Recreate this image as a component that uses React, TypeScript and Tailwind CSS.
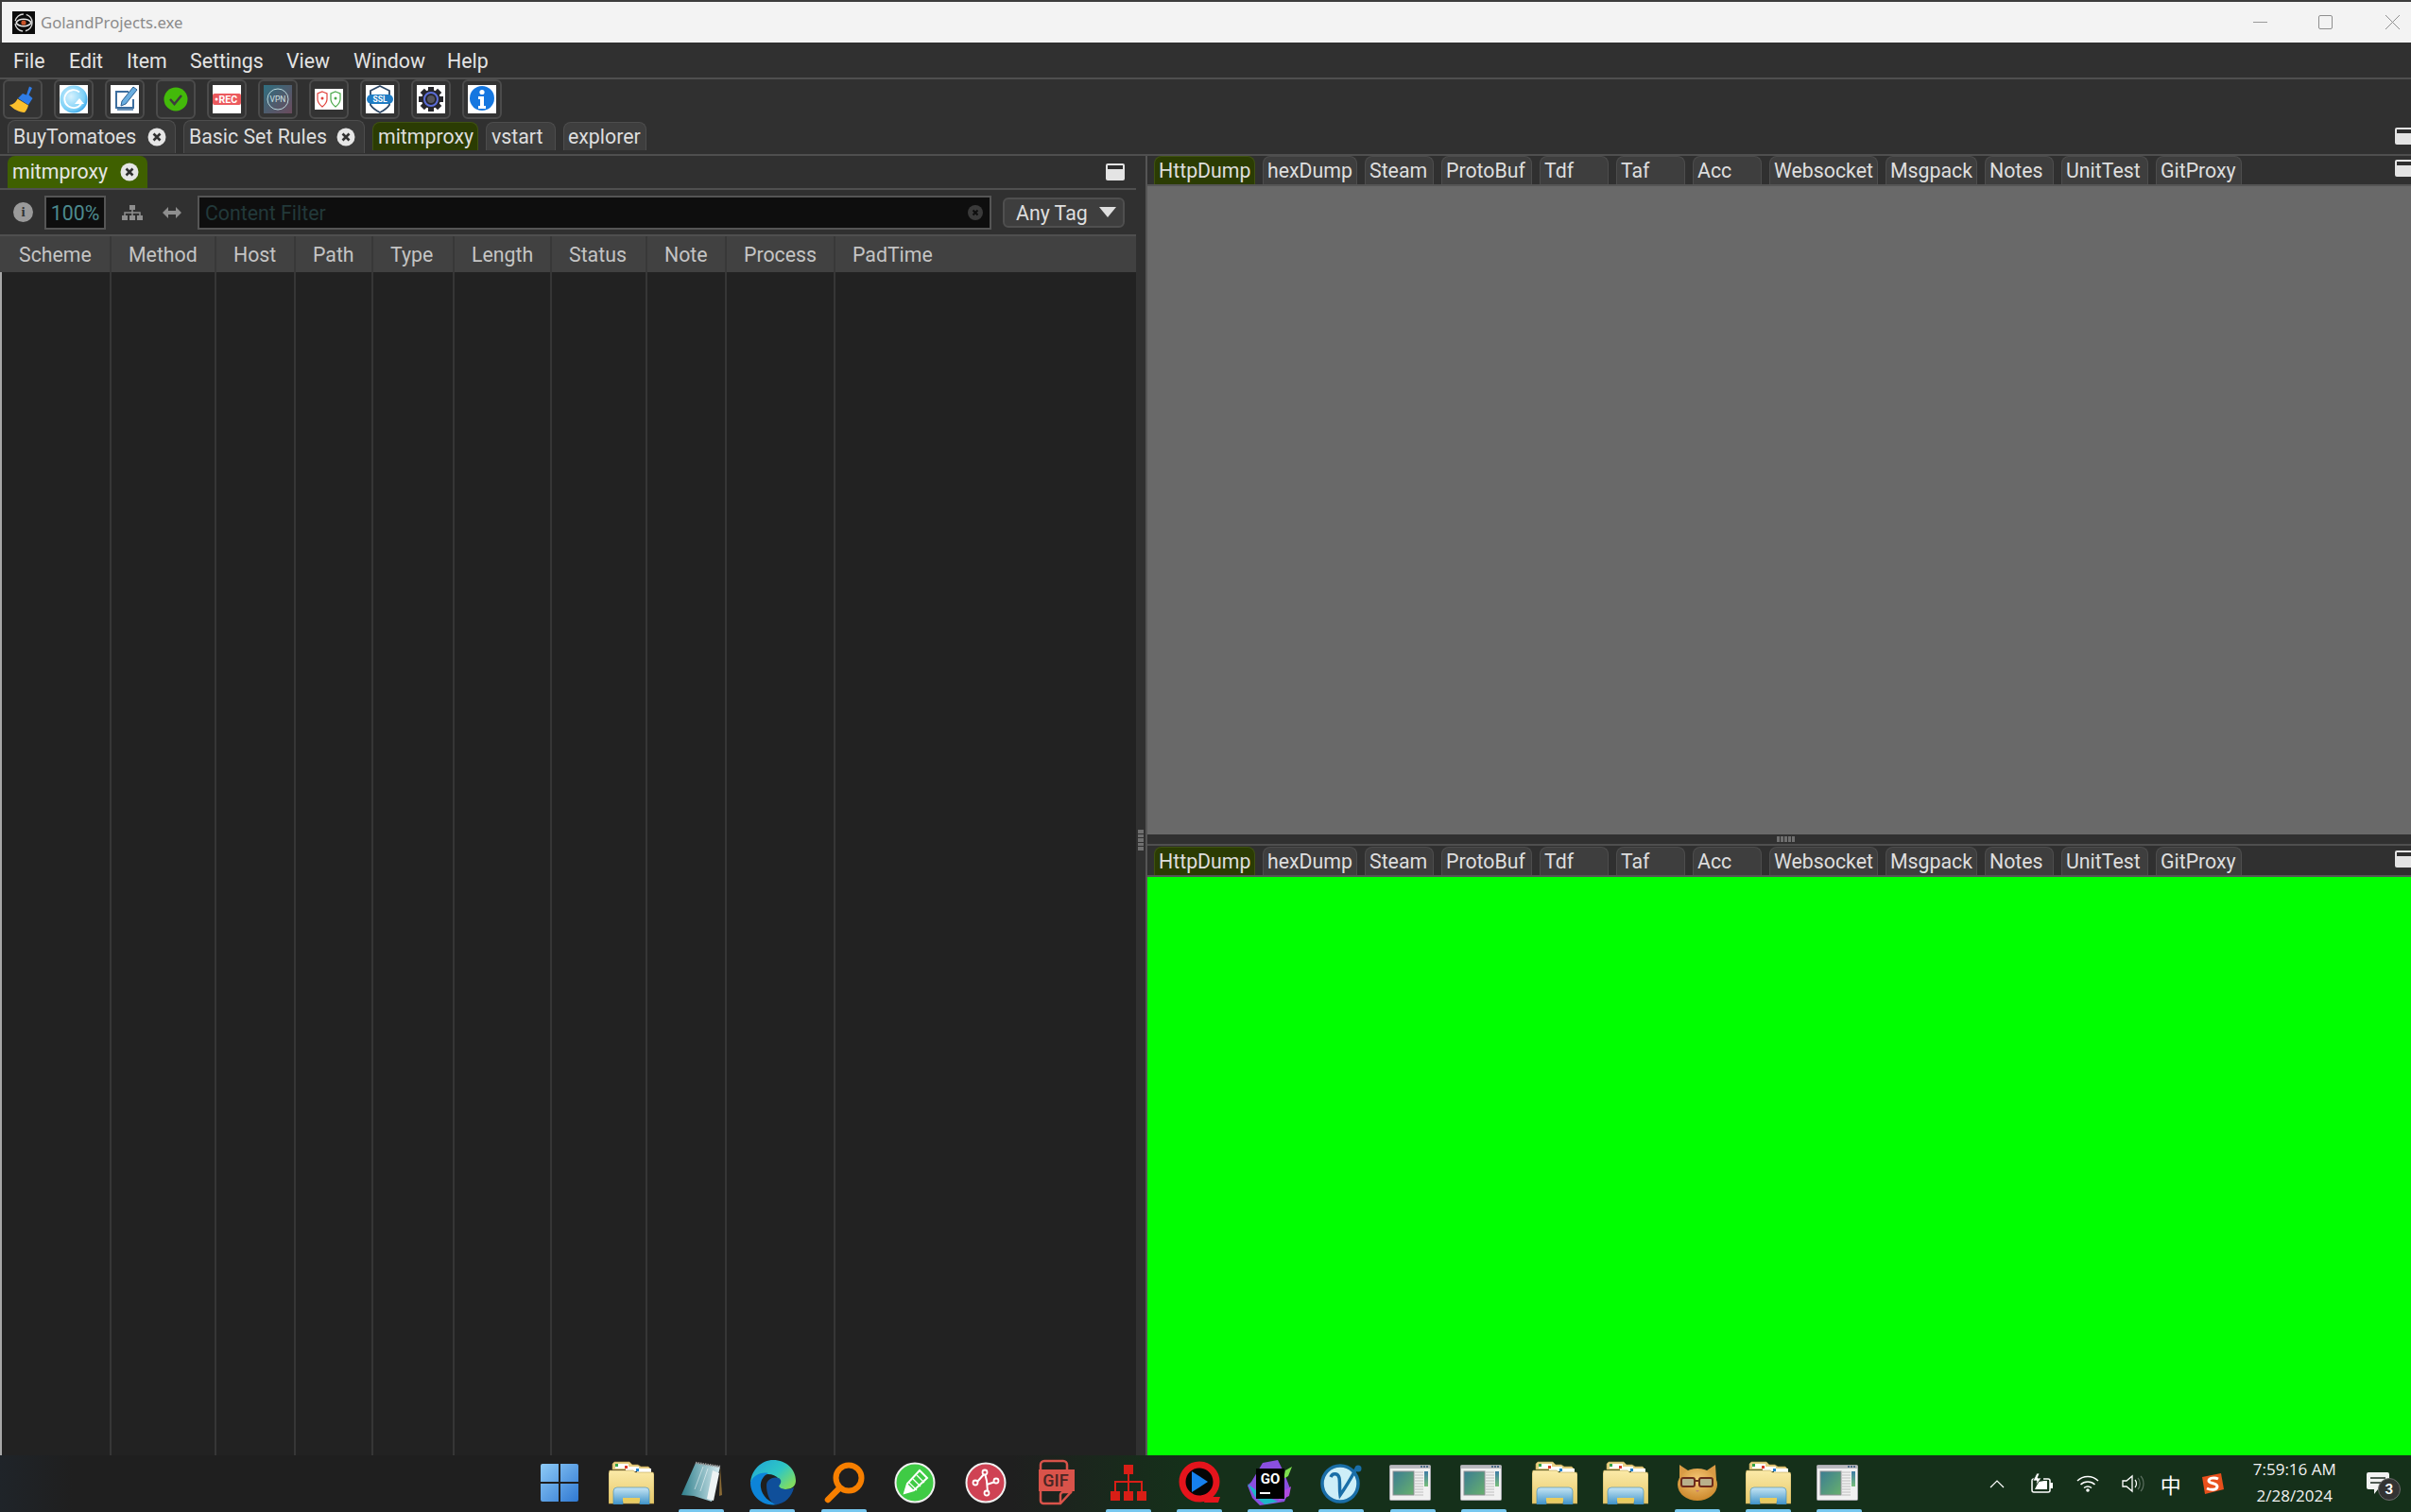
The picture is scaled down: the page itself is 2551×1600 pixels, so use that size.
import type { ReactNode } from "react";

const columns = [
  { label: "Scheme", w: "w-[116px]", pl: "pl-[18px]" },
  { label: "Method", w: "w-[111px]", pl: "pl-[18px]" },
  { label: "Host", w: "w-[84px]", pl: "pl-[18px]" },
  { label: "Path", w: "w-[82px]", pl: "pl-[18px]" },
  { label: "Type", w: "w-[86px]", pl: "pl-[18px]" },
  { label: "Length", w: "w-[103px]", pl: "pl-[18px]" },
  { label: "Status", w: "w-[101px]", pl: "pl-[18px]" },
  { label: "Note", w: "w-[84px]", pl: "pl-[18px]" },
  { label: "Process", w: "w-[115px]", pl: "pl-[18px]" },
  { label: "PadTime", w: "w-[120px]", pl: "pl-[18px]" },
];

const viewTabs = [
  { label: "HttpDump", w: "w-[107px]", active: true },
  { label: "hexDump", w: "w-[100px]" },
  { label: "Steam", w: "w-[73px]" },
  { label: "ProtoBuf", w: "w-[96px]" },
  { label: "Tdf", w: "w-[73px]" },
  { label: "Taf", w: "w-[73px]" },
  { label: "Acc", w: "w-[73px]" },
  { label: "Websocket", w: "w-[115px]" },
  { label: "Msgpack", w: "w-[97px]" },
  { label: "Notes", w: "w-[73px]" },
  { label: "UnitTest", w: "w-[92px]" },
  { label: "GitProxy", w: "w-[91px]" },
];

function CloseDot() {
  return (
    <svg viewBox="0 0 20 20" className="h-[20px] w-[20px] shrink-0">
      <circle cx="10" cy="10" r="9.5" fill="#e6e6e6" />
      <path d="M6.5 6.5l7 7M13.5 6.5l-7 7" stroke="#303030" strokeWidth="2.6" />
    </svg>
  );
}

function Collapse({ className }: { className: string }) {
  return (
    <div className={`flex h-[18px] w-[20px] shrink-0 flex-col rounded-[2px] bg-[#e4e4e4] p-[2px] ${className}`}>
      <div className="h-[4px] bg-[#2f2f2f]" />
    </div>
  );
}

function ViewTabs({ collapse }: { collapse?: boolean }) {
  return (
    <div className="flex h-[30px] shrink-0 gap-[8px] pl-[7px]">
      {viewTabs.map((t) => (
        <div
          key={t.label}
          className={`flex h-[30px] items-center rounded-t-[8px] border border-b-0 pl-[4px] text-[21.3px] text-[#dedede] ${t.w} ${
            t.active ? "border-[#3f5212] bg-[#2b3c03]" : "border-[#4d4d4d] bg-[#3e3e3e]"
          }`}
        >
          {t.label}
        </div>
      ))}
      {collapse && <Collapse className="ml-auto -mr-[3px] mt-[4px]" />}
    </div>
  );
}

function ToolBtn({ children }: { children: ReactNode }) {
  return (
    <div className="flex h-[42px] w-[42px] items-center justify-center rounded-[6px] border-2 border-[#4b4b4b] bg-[#333333]">
      {children}
    </div>
  );
}

function Grip({ vertical }: { vertical?: boolean }) {
  return (
    <div className={`flex ${vertical ? "flex-col gap-[1px]" : "gap-[1px]"}`}>
      {[0, 1, 2, 3, 4].map((i) => (
        <div key={i} className={`bg-[#6f6f6f] ${vertical ? "h-[3.5px] w-[6px]" : "h-[6px] w-[3px]"}`} />
      ))}
    </div>
  );
}

function Logo() {
  return (
    <svg viewBox="0 0 24 24" className="h-[24px] w-[24px]">
      <rect width="24" height="24" fill="#0b0b0b" />
      <circle cx="12" cy="12" r="9" fill="none" stroke="#d8d8d8" strokeWidth="1.4" strokeDasharray="12 3" />
      <path d="M4 12c3-5 13-5 16 0M4 12c3 5 13 5 16 0" fill="none" stroke="#e8e8e8" strokeWidth="1.5" />
      <circle cx="12" cy="12" r="2.6" fill="#c9542a" />
    </svg>
  );
}

function Broom() {
  return (
    <svg viewBox="0 0 30 30" className="h-[30px] w-[30px]">
      <path d="M22 1.500L25 3l-3.500 7.500 4 3.500L21 21 10 14l5-5 4 1.500z" fill="#2f7de8" />
      <path d="M9.500 14.500L21 21.500c-1 3.500-2.500 6-4 7.500C11 28.500 5 25.500 1 21c4 0 7-3 8.500-6.500z" fill="#fbc02d" />
    </svg>
  );
}

function RefreshIcon() {
  return (
    <svg viewBox="0 0 30 30" className="h-[30px] w-[30px] bg-white">
      <defs>
        <radialGradient id="rf" cx="0.4" cy="0.4" r="0.7">
          <stop offset="0" stopColor="#d7f2fe" />
          <stop offset="0.7" stopColor="#7cd0f7" />
          <stop offset="1" stopColor="#1d93e2" />
        </radialGradient>
      </defs>
      <circle cx="15" cy="15" r="14.500" fill="url(#rf)" />
      <path d="M21 7.500a9.500 9.500 0 1 0 2 12" fill="none" stroke="#fff" strokeWidth="1.800" />
      <path d="M21 14l5 6h-10z" fill="#fff" />
    </svg>
  );
}

function EditIcon() {
  return (
    <svg viewBox="0 0 30 30" className="h-[30px] w-[30px] bg-white">
      <path d="M5 6h14v2H7v15h16v-8h2v10H5z" fill="#3c6e9f" />
      <path d="M24 2l4 3-12 15-5 2 1-5z" fill="#6aaee0" stroke="#2a5f91" />
      <path d="M7 26h17" stroke="#3c6e9f" strokeWidth="1.500" />
    </svg>
  );
}

function CheckIcon() {
  return (
    <svg viewBox="0 0 30 30" className="h-[30px] w-[30px]">
      <circle cx="15" cy="15" r="12.500" fill="#43b90a" />
      <path d="M9 15l4.500 5L21 11" fill="none" stroke="#3d3d3d" strokeWidth="2.500" />
    </svg>
  );
}

function RecIcon() {
  return (
    <svg viewBox="0 0 30 30" className="h-[30px] w-[30px] bg-white">
      <rect x="0" y="9" width="30" height="12" rx="2" fill="#ec5a5e" />
      <circle cx="4" cy="15" r="1.500" fill="#fff" />
      <text x="6.500" y="19" fontSize="10.500" fontWeight="700" fill="#fff" fontFamily="Roboto,sans-serif">
        REC
      </text>
    </svg>
  );
}

function VpnIcon() {
  return (
    <svg viewBox="0 0 30 30" className="h-[30px] w-[30px]">
      <defs>
        <linearGradient id="vp" x1="0" y1="0" x2="1" y2="1">
          <stop offset="0" stopColor="#2f6f80" />
          <stop offset="1" stopColor="#6b4a5c" />
        </linearGradient>
      </defs>
      <rect width="30" height="30" fill="url(#vp)" />
      <circle cx="15" cy="15" r="11" fill="none" stroke="#b8d8dc" strokeWidth="1" />
      <text x="15" y="18" textAnchor="middle" fontSize="8.500" fill="#cfe3e5" fontFamily="Roboto,sans-serif">
        VPN
      </text>
    </svg>
  );
}

function ShieldsIcon() {
  return (
    <svg viewBox="0 0 30 22" className="h-[22px] w-[30px] bg-white">
      <path d="M8 3l5 2v6c0 4-2.500 6-5 8-2.500-2-5-4-5-8V5z" fill="none" stroke="#e0423c" strokeWidth="1.200" />
      <circle cx="8" cy="10" r="1.500" fill="#e0423c" />
      <path d="M22 3l5 2v6c0 4-2.500 6-5 8-2.500-2-5-4-5-8V5z" fill="none" stroke="#4aa84a" strokeWidth="1.200" />
      <circle cx="22" cy="10" r="1.500" fill="#4aa84a" />
    </svg>
  );
}

function SslIcon() {
  return (
    <svg viewBox="0 0 30 30" className="h-[30px] w-[30px] bg-white">
      <path d="M15 1l10 5v5H5V6z" fill="none" stroke="#2c4766" strokeWidth="1.800" />
      <path d="M5 19v2c2 3 6 6 10 8 4-2 8-5 10-8v-2" fill="none" stroke="#2c4766" strokeWidth="1.800" />
      <rect x="1" y="10" width="28" height="10" rx="5" fill="#1f7cc4" />
      <text x="15" y="18" textAnchor="middle" fontSize="8.500" fontWeight="700" fill="#fff" fontFamily="Roboto,sans-serif">
        SSL
      </text>
    </svg>
  );
}

function GearIcon() {
  return (
    <svg viewBox="0 0 30 30" className="h-[30px] w-[30px] bg-white">
      <g fill="#26262b">
        {[0, 45, 90, 135].map((a) => (
          <rect key={a} x="12" y="2" width="6" height="26" transform={`rotate(${a} 15 15)`} />
        ))}
      </g>
      <circle cx="15" cy="15" r="10" fill="#26262b" />
      <circle cx="15" cy="15" r="7" fill="none" stroke="#5b6dd8" strokeWidth="2" />
      <circle cx="15" cy="15" r="4" fill="#55555e" />
    </svg>
  );
}

function InfoIcon() {
  return (
    <svg viewBox="0 0 30 30" className="h-[30px] w-[30px] bg-white">
      <circle cx="15" cy="14" r="13" fill="#1577e0" />
      <circle cx="15" cy="7.500" r="2.600" fill="#fff" />
      <path d="M11 12h6v10h2v3h-8v-3h2v-7h-2z" fill="#fff" />
    </svg>
  );
}

function StartIcon() {
  return (
    <svg viewBox="0 0 40 40" className="h-[40px] w-[40px]">
      <defs>
        <linearGradient id="st" x1="0" y1="0" x2="1" y2="1">
          <stop offset="0" stopColor="#8ecbf7" />
          <stop offset="1" stopColor="#2f78d2" />
        </linearGradient>
      </defs>
      <path d="M2 0h17v19H0V2a2 2 0 0 1 2-2zM21 0h17a2 2 0 0 1 2 2v17H21zM0 21h19v19H2a2 2 0 0 1-2-2zM21 21h19v17a2 2 0 0 1-2 2H21z" fill="url(#st)" />
    </svg>
  );
}

function FolderIcon({ id, className = "" }: { id: string; className?: string }) {
  return (
    <svg viewBox="0 0 48 46" className={`h-[46px] w-[48px] ${className}`}>
      <defs>
        <linearGradient id={`fa${id}`} x1="0" y1="0" x2="0" y2="1">
          <stop offset="0" stopColor="#fbeaa8" />
          <stop offset="1" stopColor="#e6c869" />
        </linearGradient>
        <linearGradient id={`fb${id}`} x1="0" y1="0" x2="0" y2="1">
          <stop offset="0" stopColor="#c7e6f4" />
          <stop offset="1" stopColor="#3f93c9" />
        </linearGradient>
      </defs>
      <path d="M4 9V3l2-2h16l3 3h6l3 2h8l3 3z" fill="#e8cf84" stroke="#b99b4d" strokeWidth="0.600" />
      <rect x="7" y="3" width="14" height="5" fill="#fff" />
      <rect x="7" y="3" width="3" height="3" fill="#35a548" />
      <rect x="18" y="6" width="14" height="5" fill="#fff" />
      <rect x="17" y="5" width="3" height="3" fill="#dc3a2c" />
      <rect x="30" y="8" width="15" height="5" fill="#fff" />
      <rect x="29" y="8" width="3" height="3" fill="#2385d0" />
      <path d="M0 13l1-3h25l2 2h19l1 2v31H0z" fill={`url(#fa${id})`} stroke="#bda253" strokeWidth="0.600" />
      <path d="M5 46V32a4 4 0 0 1 4-4h30a4 4 0 0 1 4 4v14h-10v-4l-2-2H17l-2 2v4z" fill={`url(#fb${id})`} stroke="#3b86b3" strokeWidth="0.600" />
      <rect x="15" y="39" width="18" height="4" fill="#e9cc5e" />
    </svg>
  );
}

function NotepadIcon() {
  return (
    <svg viewBox="0 0 46 46" className="h-[46px] w-[46px]">
      <defs>
        <linearGradient id="np" x1="0" y1="0" x2="1" y2="0">
          <stop offset="0" stopColor="#2f7f8c" />
          <stop offset="1" stopColor="#d7ebf0" />
        </linearGradient>
      </defs>
      <path d="M43 6l2 30-3 1z" fill="#8a6a35" />
      <path d="M17 2l26 4-9 37-19-6-13-1z" fill="url(#np)" />
      <path d="M16 30l9-24M22 32l8-24" stroke="#ffffff" strokeOpacity="0.500" />
      <path d="M35 10l7 3-6 29-7-2z" fill="#eef3f4" />
      <path d="M17 2l26 4" stroke="#9a9a9a" strokeWidth="2.500" strokeDasharray="1.500 1" />
    </svg>
  );
}

function EdgeIcon() {
  return (
    <svg viewBox="0 0 48 48" className="ml-[2px] h-[48px] w-[48px]">
      <defs>
        <linearGradient id="eg" x1="0" y1="0" x2="1" y2="0.700">
          <stop offset="0" stopColor="#1fa3d9" />
          <stop offset="0.600" stopColor="#2fc7c4" />
          <stop offset="1" stopColor="#7fdc62" />
        </linearGradient>
      </defs>
      <path d="M0 24C1 10 12 0 24 0c14 0 24 10 24 22 0 6-5 9-11 9-4 0-7-1-8-3 3-2 3-5 1-8-4-5-11-6-17-4C7 18 2 21 0 24z" fill="url(#eg)" />
      <path d="M0 24c2-7 11-12 19-10-6 3-9 9-8 15 1 9 9 16 18 18C14 50 0 39 0 24z" fill="#0d84d8" />
      <path d="M17 27c0-6 6-10 13-8 3 2 3 5 0 8 1 3 4 4 8 4 3 0 6-1 8-2-2 10-10 18-20 18-6-3-9-12-9-20z" fill="#0f4f9a" />
    </svg>
  );
}

function SearchIcon() {
  return (
    <svg viewBox="0 0 44 46" className="ml-[2px] h-[46px] w-[44px]">
      <circle cx="26" cy="18" r="13.500" fill="none" stroke="#f77f00" strokeWidth="6" />
      <path d="M16 29L4 41" stroke="#f77f00" strokeWidth="6.500" strokeLinecap="round" />
    </svg>
  );
}

function PencilBadge() {
  return (
    <svg viewBox="0 0 44 44" className="h-[44px] w-[44px]">
      <circle cx="22" cy="22" r="20.500" fill="#3fcb45" stroke="#f1f1f1" strokeWidth="2" />
      <path d="M11 33l3-10L27 9l8 8-14 13z" fill="none" stroke="#fff" strokeWidth="2" />
      <path d="M11 33l3-10 7 7z" fill="#fff" />
      <path d="M16 22l8 8M20 18l8 8M24 14l8 8" stroke="#fff" strokeWidth="1.200" />
    </svg>
  );
}

function BranchBadge() {
  return (
    <svg viewBox="0 0 44 44" className="h-[44px] w-[44px]">
      <circle cx="22" cy="22" r="20.500" fill="#cf4254" stroke="#f1f1f1" strokeWidth="2" />
      <path d="M21 12l-8 9M21 12l2 8 1 12M23 24l9-3" fill="none" stroke="#fff" strokeWidth="2" />
      <circle cx="21" cy="11" r="2.500" fill="#cf4254" stroke="#fff" strokeWidth="1.800" />
      <circle cx="11" cy="22" r="2.500" fill="#cf4254" stroke="#fff" strokeWidth="1.800" />
      <circle cx="33" cy="20" r="2.500" fill="#cf4254" stroke="#fff" strokeWidth="1.800" />
      <circle cx="23" cy="33" r="2.500" fill="#cf4254" stroke="#fff" strokeWidth="1.800" />
    </svg>
  );
}

function GifIcon() {
  return (
    <svg viewBox="0 0 38 50" className="h-[50px] w-[38px]">
      <path d="M2 16V6a4 4 0 0 1 4-4h20a4 4 0 0 1 4 4v10M2 34v10a3 3 0 0 0 3 3h18l12-13" fill="none" stroke="#d9534a" strokeWidth="2.500" />
      <path d="M23 47V38a3 3 0 0 1 3-3h9" fill="none" stroke="#d9534a" strokeWidth="2.500" />
      <rect x="0" y="11" width="38" height="23" fill="#d9534a" />
      <text x="18" y="29" textAnchor="middle" fontSize="18" fontWeight="500" fill="#4a2624" fontFamily="Roboto,sans-serif">
        GIF
      </text>
    </svg>
  );
}

function NetworkIcon() {
  return (
    <svg viewBox="0 0 38 38" className="h-[38px] w-[38px]">
      <g fill="#d81e16">
        <rect x="14" y="0" width="10" height="10" />
        <rect x="0" y="28" width="10" height="10" />
        <rect x="14" y="28" width="10" height="10" />
        <rect x="28" y="28" width="10" height="10" />
      </g>
      <path d="M19 10v18M5 28V18h28v10" fill="none" stroke="#d81e16" strokeWidth="2" />
    </svg>
  );
}

function QuickIcon() {
  return (
    <svg viewBox="0 0 46 46" className="h-[46px] w-[46px]">
      <circle cx="23" cy="22" r="18" fill="#050505" stroke="#e5141c" strokeWidth="7" />
      <path d="M30 38h15l-2 6H28z" fill="#e5141c" />
      <path d="M15 11l17 11-17 11z" fill="#1680ee" />
    </svg>
  );
}

function GoIcon() {
  return (
    <svg viewBox="0 0 48 50" className="h-[50px] w-[48px]">
      <path d="M4 24L16 4l16-3 6 12 7 18-6 14-12 2-14 2-8-8L0 28z" fill="#8a4fe0" />
      <path d="M0 26l8 14 10 8 14-3-18-8z" fill="#1fb6c9" />
      <path d="M32 45l12-6 2-10-10 6z" fill="#b04be0" />
      <path d="M40 12l7-4-4 10-5 3z" fill="#7fe14f" />
      <rect x="9" y="10" width="30" height="32" fill="#000" />
      <text x="24" y="26" textAnchor="middle" fontSize="15" fontWeight="700" fill="#fff" fontFamily="Roboto,sans-serif">
        GO
      </text>
      <rect x="13" y="35" width="11" height="2" fill="#fff" />
    </svg>
  );
}

function VeeIcon() {
  return (
    <svg viewBox="0 0 44 46" className="h-[46px] w-[44px]">
      <circle cx="21" cy="24" r="19" fill="#cdeef8" stroke="#1a6ea8" strokeWidth="3.500" />
      <path d="M11 17c2-5 8-4 9 1 1 5 0 12 1 18 5-7 11-17 17-28" fill="none" stroke="#1a6ea8" strokeWidth="3.500" />
      <circle cx="40" cy="8" r="3.500" fill="#1a6ea8" />
    </svg>
  );
}

function WindowIcon({ id }: { id: string }) {
  return (
    <svg viewBox="0 0 44 38" className="mr-[5px] h-[38px] w-[44px]">
      <defs>
        <linearGradient id={`wa${id}`} x1="0" y1="0" x2="1" y2="1">
          <stop offset="0" stopColor="#3b7d93" />
          <stop offset="1" stopColor="#68b06c" />
        </linearGradient>
        <linearGradient id={`wb${id}`} x1="0" y1="0" x2="0" y2="1">
          <stop offset="0" stopColor="#3f7da6" />
          <stop offset="1" stopColor="#79be7b" />
        </linearGradient>
      </defs>
      <rect x="0.500" y="0.500" width="43" height="37" rx="1" fill="#f1f1f1" stroke="#a7a7ad" />
      <rect x="1" y="1" width="42" height="3" fill="#b9b9be" />
      <rect x="33" y="1" width="2" height="2" fill="#4f6d88" />
      <rect x="36" y="1" width="2" height="2" fill="#4f6d88" />
      <rect x="39" y="1" width="2" height="2" fill="#4f6d88" />
      <rect x="4" y="7" width="22" height="25" fill={`url(#wa${id})`} stroke="#8f8f95" />
      <path d="M27 8h9M27 11h9M27 14h9M27 17h9M27 20h9M27 23h9M27 26h9M27 29h9M27 32h9" stroke="#bdbdbd" />
      <rect x="37" y="7" width="4" height="16" fill={`url(#wb${id})`} />
    </svg>
  );
}

function CatIcon() {
  return (
    <svg viewBox="0 0 44 40" className="h-[40px] w-[44px]">
      <defs>
        <radialGradient id="ct" cx="0.5" cy="0.35" r="0.7">
          <stop offset="0" stopColor="#f5c877" />
          <stop offset="1" stopColor="#c98326" />
        </radialGradient>
      </defs>
      <path d="M3 1l9 6h20l9-6 1 16H3z" fill="#d99b45" />
      <ellipse cx="22" cy="22" rx="21" ry="17" fill="url(#ct)" />
      <rect x="5" y="15" width="14" height="9" rx="2" fill="#b9b08c" stroke="#6d2a1c" strokeWidth="2" />
      <rect x="24" y="15" width="14" height="9" rx="2" fill="#b9b08c" stroke="#6d2a1c" strokeWidth="2" />
      <path d="M19 18h5" stroke="#6d2a1c" strokeWidth="2" />
      <path d="M20 28h4l-2 2z" fill="#c97a70" />
    </svg>
  );
}

const taskbarIcons: { key: string; icon: ReactNode; on?: boolean }[] = [
  { key: "start", icon: <StartIcon /> },
  { key: "explorer", icon: <FolderIcon id="a" className="ml-[3px]" /> },
  { key: "notepad", icon: <NotepadIcon />, on: true },
  { key: "edge", icon: <EdgeIcon />, on: true },
  { key: "search", icon: <SearchIcon />, on: true },
  { key: "pencil", icon: <PencilBadge /> },
  { key: "branch", icon: <BranchBadge /> },
  { key: "gif", icon: <GifIcon /> },
  { key: "network", icon: <NetworkIcon />, on: true },
  { key: "quick", icon: <QuickIcon />, on: true },
  { key: "go", icon: <GoIcon />, on: true },
  { key: "vee", icon: <VeeIcon />, on: true },
  { key: "win1", icon: <WindowIcon id="a" />, on: true },
  { key: "win2", icon: <WindowIcon id="b" />, on: true },
  { key: "folder2", icon: <FolderIcon id="b" /> },
  { key: "folder3", icon: <FolderIcon id="c" /> },
  { key: "cat", icon: <CatIcon />, on: true },
  { key: "folder4", icon: <FolderIcon id="d" />, on: true },
  { key: "win3", icon: <WindowIcon id="c" />, on: true },
];

export default function App() {
  return (
    <div className="flex h-[1600px] w-[2551px] flex-col overflow-hidden bg-[#303030] [font-family:Roboto,sans-serif]">
      {/* title bar */}
      <div className="flex h-[45px] shrink-0 items-center border-l-2 border-t-2 border-[#3c3c3c] bg-[#f3f3f3] pl-[11px]">
        <Logo />
        <span className="ml-[6px] text-[16.7px] text-[#8b8b8b] [font-family:'Noto_Sans',sans-serif]">GolandProjects.exe</span>
        <div className="ml-auto flex items-center pr-[12px]">
          <div className="h-[1px] w-[15px] bg-[#9a9a9a]" />
          <div className="ml-[54px] h-[15px] w-[15px] rounded-[2px] border border-[#8f8f8f]" />
          <svg viewBox="0 0 15 15" className="ml-[56px] h-[15px] w-[15px]">
            <path d="M0 0l15 15M15 0L0 15" stroke="#8f8f8f" />
          </svg>
        </div>
      </div>

      {/* menu */}
      <div className="flex h-[39px] shrink-0 items-center border-b-2 border-[#4f4f4f] pl-[14px] pt-[2px] text-[21.3px] text-[#e4e4e4]">
        <span className="w-[59px]">File</span>
        <span className="w-[61px]">Edit</span>
        <span className="w-[67px]">Item</span>
        <span className="w-[102px]">Settings</span>
        <span className="w-[71px]">View</span>
        <span className="w-[99px]">Window</span>
        <span>Help</span>
      </div>

      {/* toolbar */}
      <div className="flex h-[43px] shrink-0 gap-[12px] pl-[3px]">
        <ToolBtn><Broom /></ToolBtn>
        <ToolBtn><RefreshIcon /></ToolBtn>
        <ToolBtn><EditIcon /></ToolBtn>
        <ToolBtn><CheckIcon /></ToolBtn>
        <ToolBtn><RecIcon /></ToolBtn>
        <ToolBtn><VpnIcon /></ToolBtn>
        <ToolBtn><ShieldsIcon /></ToolBtn>
        <ToolBtn><SslIcon /></ToolBtn>
        <ToolBtn><GearIcon /></ToolBtn>
        <ToolBtn><InfoIcon /></ToolBtn>
      </div>

      {/* workspace tabs */}
      <div className="flex h-[38px] shrink-0 gap-[8px] border-b-2 border-[#4f4f4f] pl-[8px] text-[21.3px] text-[#dedede]">
        <div className="flex h-[35px] w-[178px] items-center justify-between rounded-t-[8px] border border-b-0 border-[#4d4d4d] bg-[#3a3a3a] pl-[5px] pr-[9px]">
          BuyTomatoes <CloseDot />
        </div>
        <div className="flex h-[35px] w-[192px] items-center justify-between rounded-t-[8px] border border-b-0 border-[#4d4d4d] bg-[#3a3a3a] pl-[5px] pr-[9px]">
          Basic Set Rules <CloseDot />
        </div>
        <div className="mt-[2px] flex h-[30px] w-[112px] items-center rounded-t-[8px] border border-b-0 border-[#3f5212] bg-[#2b3c03] pl-[5px]">
          mitmproxy
        </div>
        <div className="mt-[2px] flex h-[30px] w-[74px] items-center rounded-t-[8px] border border-b-0 border-[#4d4d4d] bg-[#3e3e3e] pl-[5px]">
          vstart
        </div>
        <div className="mt-[2px] flex h-[30px] w-[88px] items-center rounded-t-[8px] border border-b-0 border-[#4d4d4d] bg-[#3e3e3e] pl-[4px]">
          explorer
        </div>
        <Collapse className="ml-auto -mr-[3px] mt-[8px]" />
      </div>

      <div className="flex min-h-0 flex-1">
        {/* left pane */}
        <div className="flex w-[1202px] shrink-0 flex-col">
          <div className="flex h-[36px] shrink-0 justify-between border-b-2 border-[#4f4f4f] pl-[8px] pr-[12px]">
            <div className="flex h-[34px] w-[148px] items-center justify-between rounded-t-[8px] bg-[#3f6000] pl-[5px] pr-[9px] text-[21.3px] text-[#e6e6e6]">
              mitmproxy <CloseDot />
            </div>
            <Collapse className="mt-[8px]" />
          </div>

          <div className="flex h-[49px] shrink-0 items-center border-b-2 border-[#4f4f4f] pl-[14px]">
            <div className="flex h-[21px] w-[21px] items-center justify-center rounded-full bg-[#9a9a9a] text-[15px] font-bold text-[#333333] [font-family:'Liberation_Serif',serif]">
              i
            </div>
            <div className="ml-[12px] flex h-[36px] w-[65px] items-center justify-center border-2 border-[#555555] bg-[#0e0e0e] pt-[2px] text-[21.3px] text-[#4c8a8d]">
              100%
            </div>
            <svg viewBox="0 0 22 16" className="ml-[17px] h-[16px] w-[22px]">
              <g fill="#8e8e8e">
                <rect x="8" y="0" width="6" height="5" />
                <rect x="0" y="11" width="6" height="5" />
                <rect x="8" y="11" width="6" height="5" />
                <rect x="16" y="11" width="6" height="5" />
              </g>
              <path d="M11 5v6M3 11V8h16v3" fill="none" stroke="#8e8e8e" strokeWidth="1.500" />
            </svg>
            <svg viewBox="0 0 20 14" className="ml-[21px] h-[14px] w-[20px]">
              <path d="M0 7l6-6v4h8V1l6 6-6 6V9H6v4z" fill="#8e8e8e" />
            </svg>
            <div className="ml-[17px] flex h-[36px] w-[840px] items-center justify-between border-2 border-[#555555] bg-[#0e0e0e] pl-[6px] pr-[7px] text-[21.3px] text-[#22393a]">
              <span className="pt-[2px]">Content Filter</span>
              <svg viewBox="0 0 16 16" className="h-[16px] w-[16px]">
                <circle cx="8" cy="8" r="8" fill="#3a3a3a" />
                <path d="M5.500 5.500l5 5M10.500 5.500l-5 5" stroke="#0e0e0e" strokeWidth="2" />
              </svg>
            </div>
            <div className="ml-[12px] flex h-[32px] w-[129px] items-center justify-between rounded-[6px] border-2 border-[#4f4f4f] bg-[#3e3e3e] pl-[12px] pr-[7px] text-[21.3px] text-[#dedede]">
              <span className="pt-[2px]">Any Tag</span>
              <svg viewBox="0 0 18 11" className="h-[11px] w-[18px]">
                <path d="M0 0h18L9 11z" fill="#dedede" />
              </svg>
            </div>
          </div>

          <div className="flex h-[38px] shrink-0 border-l-2 border-[#414141] bg-[#414141] pt-[2px] text-[21.3px] text-[#c4c4c4]">
            {columns.map((c) => (
              <div key={c.label} className={`-mt-[2px] flex items-center border-r-2 border-[#383838] pt-[2px] last:border-r-0 ${c.w} ${c.pl}`}>
                {c.label}
              </div>
            ))}
          </div>

          <div className="flex min-h-0 flex-1 border-l-2 border-[#a8a8a8] bg-[#222222]">
            {columns.slice(0, -1).map((c) => (
              <div key={c.label} className={`border-r-2 border-[#363636] ${c.w}`} />
            ))}
          </div>
        </div>

        {/* vertical splitter */}
        <div className="flex w-[12px] shrink-0 flex-col items-center border-r-2 border-[#555555] pt-[713px]">
          <Grip vertical />
        </div>

        {/* right pane */}
        <div className="flex min-w-0 flex-1 flex-col">
          <ViewTabs collapse />
          <div className="h-[688px] shrink-0 border-t-2 border-[#555555] bg-[#696969]" />
          <div className="flex h-[12px] shrink-0 items-center border-b-2 border-[#4f4f4f] bg-[#303030] pl-[666px]">
            <Grip />
          </div>
          <div className="pt-[1px]">
            <ViewTabs collapse />
          </div>
          <div className="min-h-0 flex-1 border-t-2 border-[#555555] bg-[#00ff00]" />
        </div>
      </div>

      {/* taskbar */}
      <div className="flex h-[60px] shrink-0 bg-[linear-gradient(90deg,#1f2429_0,#1f1f1f_3%,#1f1f1f_42%,#15301a_49%,#15301a_100%)] pl-[554px]">
        {taskbarIcons.map((t) => (
          <div key={t.key} className="flex h-[60px] w-[75.25px] shrink-0 flex-col items-center">
            <div className="flex h-[57px] items-center justify-center">{t.icon}</div>
            {t.on && <div className="h-[3px] w-[48px] rounded-t-[2px] bg-[#76c7ef]" />}
          </div>
        ))}

        <div className="ml-[105px] flex items-center text-white">
          <div className="flex w-[48px] justify-center">
            <svg viewBox="0 0 16 10" className="h-[10px] w-[16px]">
              <path d="M1 9l7-7 7 7" fill="none" stroke="#fff" strokeWidth="1.200" />
            </svg>
          </div>
          <div className="flex w-[48px] justify-center">
            <svg viewBox="0 0 24 24" className="h-[24px] w-[24px]">
              <path d="M7 7H3a2 2 0 0 0-2 2v10a2 2 0 0 0 2 2h15a2 2 0 0 0 2-2V9a2 2 0 0 0-2-2h-5" fill="none" stroke="#fff" strokeWidth="1.500" />
              <path d="M20 11h3v6h-3z" fill="#fff" />
              <path d="M4 18l4-8 6-1 3 0v9z" fill="#fff" />
              <path d="M6 1L2 9h4l-1 5 6-8H7l2-5z" fill="#fff" stroke="#15301a" strokeWidth="0.800" />
            </svg>
          </div>
          <div className="flex w-[48px] justify-center">
            <svg viewBox="0 0 24 18" className="h-[18px] w-[24px]">
              <path d="M1 6c6-6 16-6 22 0M4.500 10c4-4 11-4 15 0M8 13.500c2.500-2 5.500-2 8 0" fill="none" stroke="#fff" strokeWidth="1.500" />
              <circle cx="12" cy="16" r="1.800" fill="#fff" />
            </svg>
          </div>
          <div className="flex w-[48px] justify-center">
            <svg viewBox="0 0 24 20" className="h-[20px] w-[24px]">
              <path d="M1 7h4l6-5v16l-6-5H1z" fill="none" stroke="#fff" strokeWidth="1.300" />
              <path d="M14 6c2 2 2 6 0 8" fill="none" stroke="#fff" strokeWidth="1.300" />
              <path d="M17 4c3 3 3 9 0 12M20 2c4 4 4 12 0 16" fill="none" stroke="#5c6f60" strokeWidth="1.200" />
            </svg>
          </div>
          <div className="flex w-[32px] justify-center text-[22px] [font-family:'Noto_Sans_CJK_SC',sans-serif]">中</div>
          <div className="flex w-[56px] justify-center">
            <svg viewBox="0 0 24 24" className="h-[24px] w-[24px]">
              <path d="M1 5l20-4 3 17-20 5z" fill="#e8501c" />
              <path d="M18 7c-4-2-10-1-10 2s9 2 9 6-7 4-11 2" fill="none" stroke="#fff" strokeWidth="3" />
            </svg>
          </div>
          <div className="flex w-[118px] flex-col items-center pb-[3px] text-[17px] leading-[28px] text-[#f2f2f2] [font-family:'Open_Sans',sans-serif]">
            <span>7:59:16 AM</span>
            <span>2/28/2024</span>
          </div>
          <div className="relative flex w-[58px] justify-center">
            <svg viewBox="0 0 24 24" className="h-[24px] w-[24px]">
              <path d="M2 0h20a2 2 0 0 1 2 2v14a2 2 0 0 1-2 2H12l-4 5v-5H2a2 2 0 0 1-2-2V2a2 2 0 0 1 2-2z" fill="#f2f2f2" />
              <path d="M4 6h16M4 11h16" stroke="#1c2a20" strokeWidth="1.500" />
            </svg>
            <div className="absolute left-[29px] top-[6px] flex h-[24px] w-[24px] items-center justify-center rounded-full border border-[#6a6a6a] bg-[#333333] text-[15px] font-bold text-white">
              3
            </div>
          </div>
        </div>
      </div>
    </div>
  );
}
